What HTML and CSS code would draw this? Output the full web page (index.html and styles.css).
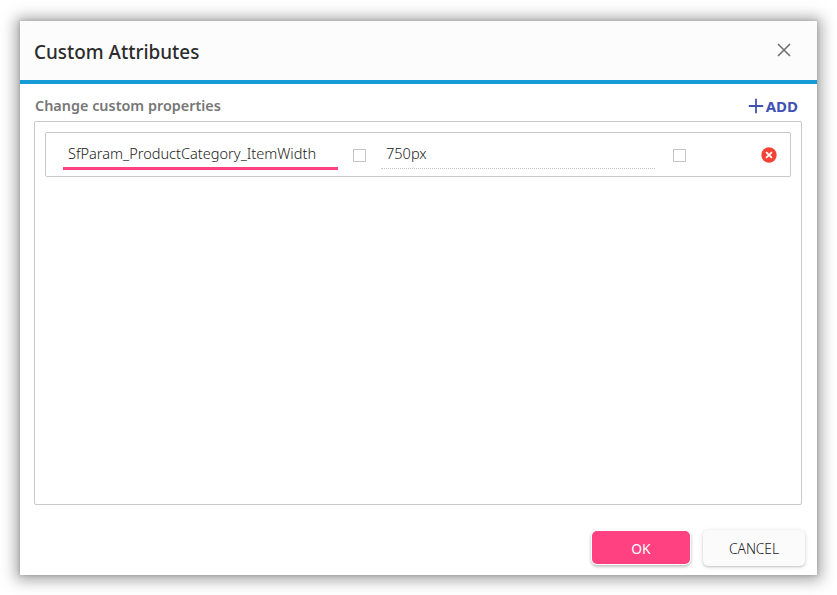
FILE: index.html
```
<!DOCTYPE html>
<html lang="en">
<head>
<meta charset="utf-8">
<title>Custom Attributes</title>
<link rel="stylesheet" href="styles.css">
</head>
<body>
<section class="dialog">
  <header class="header">
    <h1 class="title"><span>Custom Attributes</span></h1>
    <svg class="close" width="14" height="14" viewBox="0 0 14 14"><path d="M1 1L13 13M13 1L1 13"/></svg>
  </header>
  <main class="content">
    <div class="caption">
      <h2 class="subtitle">Change custom properties</h2>
      <div class="add"><svg width="16" height="16" viewBox="0 0 16 16"><path d="M8 .8V15.2M.8 8H15.2"/></svg><span>ADD</span></div>
    </div>
    <div class="list">
      <div class="row">
        <div class="field active"><span class="name">SfParam_ProductCategory_ItemWidth</span></div>
        <span class="check"></span>
        <div class="field"><span>750px</span></div>
        <span class="check"></span>
        <svg class="remove" width="16" height="16" viewBox="0 0 16 16"><circle cx="8" cy="8" r="7.7"/><path d="M5.1 5.1L10.9 10.9M10.9 5.1L5.1 10.9"/></svg>
      </div>
    </div>
  </main>
  <footer class="footer">
    <div class="button ok"><span>OK</span></div>
    <div class="button cancel"><span>CANCEL</span></div>
  </footer>
</section>
</body>
</html>
```
FILE: styles.css
```
* { box-sizing: border-box; }
body {
  margin: 0;
  padding: 21px 20px 20px;
  height: 595px;
  overflow: hidden;
  background: #fff;
  font-family: "Noto Sans", "Open Sans", sans-serif;
  color: #222;
}
svg { display: block; flex: none; fill: none; }
.dialog {
  display: flex;
  flex-direction: column;
  width: 797px;
  height: 554px;
  background: #fff;
  box-shadow: 0 0 3px 1px rgba(0,0,0,.12), 0 1px 14px 4px rgba(0,0,0,.36);
}
.header {
  display: flex;
  justify-content: space-between;
  height: 63px;
  padding: 0 26px 0 14px;
  background: #fcfcfc;
  border-bottom: 4px solid #179bd7;
}
.title {
  margin: 0;
  padding-top: 18px;
  font-size: 18.9px;
  line-height: 26px;
  font-weight: 500;
  color: #2c2c2c;
}
.close { margin-top: 22px; stroke: #707070; stroke-width: 1.6; }
.content { padding: 0 15px 0 14px; }
.caption {
  display: flex;
  justify-content: space-between;
  height: 37px;
  padding: 11px 4px 0 1px;
}
.subtitle {
  margin: 0;
  font-size: 14.4px;
  line-height: 22px;
  font-weight: 600;
  color: #777;
}
.add {
  display: flex;
  gap: 2px;
  padding-top: 3px;
  font-size: 15px;
  line-height: 16px;
  font-weight: 700;
  color: #3f51b5;
}
.add svg { stroke: #3f51b5; stroke-width: 1.8; }
.list {
  height: 384px;
  padding: 10px;
  border: 1px solid #c8c8c8;
  border-radius: 2px;
}
.row {
  display: flex;
  height: 45px;
  padding-left: 17px;
  border: 1px solid #c8c8c8;
  border-radius: 2px;
}
.field {
  width: 274px;
  height: 36px;
  padding: 10px 0 0 5px;
  border-bottom: 1px dotted #c4c4c4;
  font-size: 14.55px;
  line-height: 20px;
  font-weight: 300;
  white-space: nowrap;
}
.field.active { width: 275px; height: 37px; border-bottom: 3px solid #ff4081; }
.check {
  flex: none;
  width: 13px;
  height: 13px;
  margin: 16px 15px 0;
  border: 1px solid #c4c4c4;
}
.field:not(.active) + .check { margin-left: 18px; margin-right: 75px; }
.remove { margin-top: 14px; stroke: #fff; stroke-width: 1.8; }
.remove circle { fill: #f44336; stroke: none; }
.footer {
  display: flex;
  justify-content: flex-end;
  gap: 13px;
  padding: 25px 12px 0 0;
}
.button {
  height: 36px;
  border-radius: 5px;
  font-size: 13.8px;
  line-height: 37px;
  text-align: center;
  box-shadow: 0 1px 2px rgba(0,0,0,.16), 0 1px 5px rgba(0,0,0,.12);
}
.ok {
  width: 98px;
  height: 33px;
  margin-top: 1px;
  background: #ff4081;
  color: #fff;
  line-height: 36px;
  box-shadow: 0 0 0 1px #fff, 0 2px 3px 1px rgba(0,0,0,.18), 0 1px 5px rgba(0,0,0,.14);
}
.cancel {
  width: 102px;
  background: #fbfbfb;
  font-weight: 300;
  letter-spacing: -.1px;
}
```
